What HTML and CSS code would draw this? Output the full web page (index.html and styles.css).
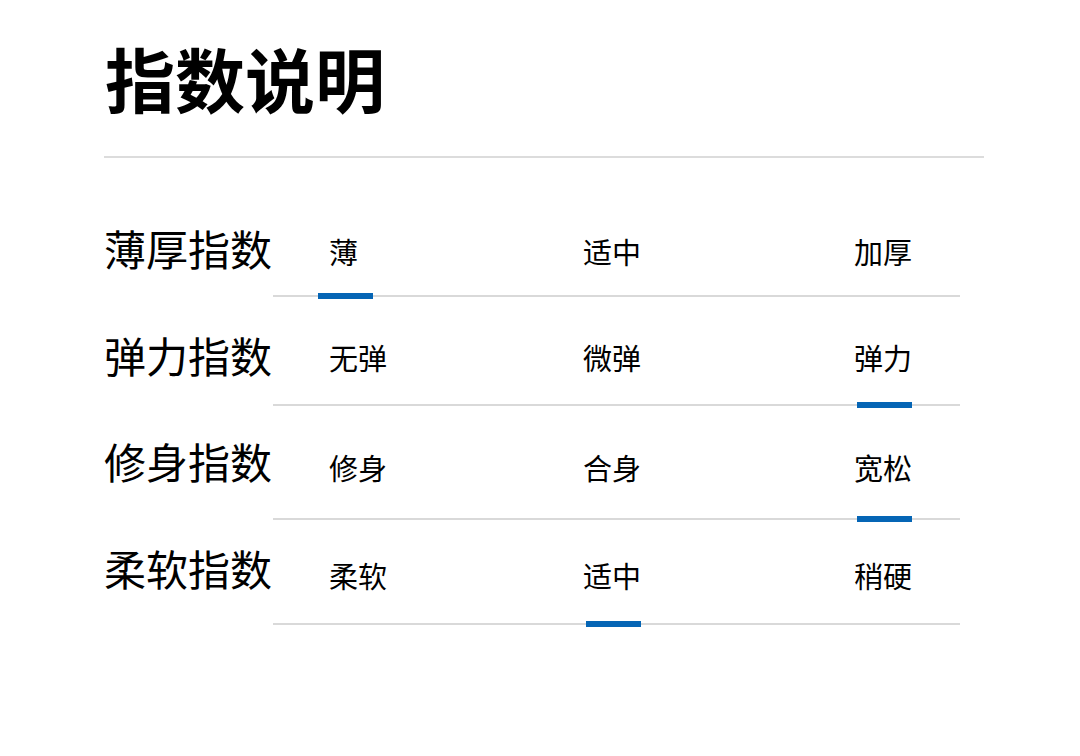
FILE: index.html
```html
<!DOCTYPE html>
<html lang="zh-CN">
<head>
<meta charset="utf-8">
<title>指数说明</title>
<link rel="stylesheet" href="styles.css">
</head>
<body>
<main class="page">
  <h1 class="title">指数说明</h1>
  <div class="rule"></div>
  <section class="table">
    <div class="row">
      <div class="label">薄厚指数</div>
      <div class="opts">
        <div class="opt is-on">薄</div>
        <div class="opt">适中</div>
        <div class="opt">加厚</div>
      </div>
    </div>
    <div class="row">
      <div class="label">弹力指数</div>
      <div class="opts">
        <div class="opt">无弹</div>
        <div class="opt">微弹</div>
        <div class="opt is-on">弹力</div>
      </div>
    </div>
    <div class="row">
      <div class="label">修身指数</div>
      <div class="opts">
        <div class="opt">修身</div>
        <div class="opt">合身</div>
        <div class="opt is-on">宽松</div>
      </div>
    </div>
    <div class="row">
      <div class="label">柔软指数</div>
      <div class="opts">
        <div class="opt">柔软</div>
        <div class="opt is-on">适中</div>
        <div class="opt">稍硬</div>
      </div>
    </div>
  </section>
</main>
</body>
</html>
```
FILE: styles.css
```css
* { box-sizing: border-box; }
html, body { margin: 0; padding: 0; background: #ffffff; }
body {
  font-family: "Noto Sans CJK SC", "Noto Sans", sans-serif;
  color: #000;
  width: 1080px;
  height: 756px;
  overflow: hidden;
}
.page {
  padding: 43px 0 0 104px;
  width: 984px;
}
.title {
  margin: 0;
  font-size: 70px;
  line-height: 70px;
  font-weight: 700;
  letter-spacing: 0;
  padding-left: 1px;
}
.rule {
  margin-top: 43px;
  height: 2px;
  background: #dcdcdc;
  width: 880px;
}
.table {
  display: grid;
  grid-template-rows: 139px 109px 114px 105px;
}
.row {
  display: flex;
  align-items: stretch;
}
.label {
  width: 169px;
  display: flex;
  align-items: flex-end;
  font-size: 42px;
  line-height: 42px;
  padding-bottom: 30px;
  white-space: nowrap;
}
.opts {
  width: 687px;
  border-bottom: 2px solid #d9d9d9;
  display: grid;
  grid-template-columns: 254px 271px auto;
  padding-left: 56px;
  align-items: stretch;
}
.opt {
  position: relative;
  justify-self: start;
  display: flex;
  align-items: flex-end;
  font-size: 29px;
  line-height: 30px;
  padding-bottom: 32px;
}
.row:nth-child(1) .opt { padding-bottom: 29px; }
.row:nth-child(1) .label { padding-bottom: 28px; }
.row:nth-child(3) .opt { padding-bottom: 36px; }
.row:nth-child(3) .label { padding-bottom: 38px; }
.row:nth-child(4) .opt { padding-bottom: 33px; }
.row:nth-child(4) .label { padding-bottom: 36px; }
.opt.is-on::after {
  content: "";
  position: absolute;
  left: 50%;
  bottom: -4px;
  width: 55px;
  height: 6px;
  margin-left: -26px;
  background: #0565b5;
}
```
